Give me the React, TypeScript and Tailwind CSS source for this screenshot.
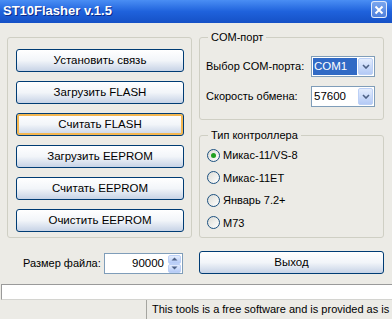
import clsx from 'clsx'

const ui = "font-['Liberation_Sans',Arial,sans-serif]"

function XpButton({ label, focused }: { label: string; focused?: boolean }) {
  return (
    <button
      className={clsx(
        'h-[23px] w-full rounded-[3px] border border-[#003c74] bg-linear-to-b from-white via-[#f2f5f9] to-[#c7d3e6] text-[11.5px] text-black',
        focused && 'shadow-[inset_0_0_0_2px_#f4b751]'
      )}
    >
      {label}
    </button>
  )
}

function GroupBox({ title, className, children }: { title: string; className?: string; children: React.ReactNode }) {
  return (
    <div className={clsx('relative rounded-[3px] border border-[#cfcfc4]', className)}>
      {title && (
        <span className="absolute -top-[8px] left-[8px] bg-[#ecebe6] px-[3px] text-[11px] leading-[15px] text-black">
          {title}
        </span>
      )}
      {children}
    </div>
  )
}

function ComboArrow() {
  return (
    <div className="flex h-full w-[15px] shrink-0 items-center justify-center rounded-[2px] border border-[#bcd0f6] bg-linear-to-b from-[#e4edfd] to-[#b4caf6]">
      <svg width="8" height="5" viewBox="0 0 8 5">
        <path d="M1 1 L4 4 L7 1" fill="none" stroke="#4d6185" strokeWidth="1.6" />
      </svg>
    </div>
  )
}

function Combo({ value, selected }: { value: string; selected?: boolean }) {
  return (
    <div className="flex h-[21px] w-[64px] shrink-0 border border-[#7f9db9] bg-white p-[1px]">
      <div className="flex-1 pr-[1px]">
        <div
          className={clsx(
            'flex h-full items-center px-[1px] text-[11.5px]',
            selected ? 'bg-[#316ac5] text-white' : 'text-black'
          )}
        >
          {value}
        </div>
      </div>
      <ComboArrow />
    </div>
  )
}

function Radio({ label, checked }: { label: string; checked?: boolean }) {
  return (
    <div className="flex h-[22.5px] items-center">
      <div className="flex h-[13px] w-[13px] items-center justify-center rounded-full border border-[#1c5180] bg-linear-to-br from-[#dcdcd6] to-white">
        {checked && <div className="h-[5px] w-[5px] rounded-full bg-[#21a121]" />}
      </div>
      <span className="ml-[3px] text-[11px] text-black">{label}</span>
    </div>
  )
}

function SpinArrow({ up }: { up?: boolean }) {
  return (
    <div className="flex h-[9px] w-[13px] items-center justify-center rounded-[2px] border border-[#bcd0f6] bg-linear-to-b from-[#e4edfd] to-[#b4caf6]">
      <svg width="7" height="4" viewBox="0 0 7 4">
        <path d={up ? 'M0.5 3.5 L3.5 0.5 L6.5 3.5 Z' : 'M0.5 0.5 L3.5 3.5 L6.5 0.5 Z'} fill="#4d6185" />
      </svg>
    </div>
  )
}

export default function App() {
  return (
    <div className={clsx('h-[319px] w-[392px] overflow-hidden bg-[#ecebe6]', ui)}>
      {/* title bar */}
      <div className="flex h-[23px] items-start justify-between bg-linear-to-b from-[#4a8ef4] via-[#1f62dc] to-[#1551c6] pl-[3px] pr-[5px]">
        <span className="mt-[3px] text-[13px] font-bold leading-[16px] text-white [text-shadow:1px_1px_0_#0a2a8a]">
          ST10Flasher v.1.5
        </span>
        <div className="mt-[1px] flex h-[17px] w-[16px] items-center justify-center rounded-[3px] border border-white/80 bg-linear-to-b from-[#7aa6ee] to-[#4f80dc]">
          <svg width="10" height="10" viewBox="0 0 10 10">
            <path d="M1.5 1.5 L8.5 8.5 M8.5 1.5 L1.5 8.5" stroke="white" strokeWidth="2" />
          </svg>
        </div>
      </div>

      {/* main */}
      <div className="flex h-[261px] gap-[7px] px-[7px] pt-[14px]">
        <div className="flex w-[185px] flex-col">
          <GroupBox title="" className="h-[201px]">
            <div className="flex flex-col gap-[9px] pl-[8px] pr-[7px] pt-[11px]">
              <XpButton label="Установить связь" />
              <XpButton label="Загрузить FLASH" />
              <XpButton label="Считать FLASH" focused />
              <XpButton label="Загрузить EEPROM" />
              <XpButton label="Считать EEPROM" />
              <XpButton label="Очистить EEPROM" />
            </div>
          </GroupBox>
          <div className="mt-[15px] flex items-center">
            <span className="ml-[16px] w-[81px] shrink-0 whitespace-nowrap text-[11px] text-black">Размер файла:</span>
            <div className="flex h-[21px] w-[79px] shrink-0 items-center border border-[#7f9db9] bg-white p-[1px]">
              <span className="flex-1 pr-[4px] text-right text-[11.5px] text-black">90000</span>
              <div className="flex flex-col">
                <SpinArrow up />
                <SpinArrow />
              </div>
            </div>
          </div>
        </div>

        <div className="flex w-[185px] flex-col">
          <GroupBox title="COM-порт" className="h-[83px]">
            <div className="flex flex-col gap-[9px] pl-[6px] pr-[8px] pt-[18px]">
              <div className="flex items-center justify-between">
                <span className="whitespace-nowrap text-[11px] text-black">Выбор COM-порта:</span>
                <Combo value="COM1" selected />
              </div>
              <div className="flex items-center justify-between">
                <span className="whitespace-nowrap text-[11px] text-black">Скорость обмена:</span>
                <Combo value="57600" />
              </div>
            </div>
          </GroupBox>
          <GroupBox title="Тип контроллера" className="mt-[15px] h-[103px]">
            <div className="flex flex-col pl-[7px] pt-[8px]">
              <Radio label="Микас-11/VS-8" checked />
              <Radio label="Микас-11ET" />
              <Radio label="Январь 7.2+" />
              <Radio label="M73" />
            </div>
          </GroupBox>
          <div className="mt-[11px]">
            <XpButton label="Выход" />
          </div>
        </div>
      </div>

      {/* progress bar */}
      <div className="ml-[1px] h-[16px] border-l border-t border-b border-[#9a9a9a] border-b-[#d4d4d0] bg-white" />

      {/* status bar */}
      <div className="flex h-[19px]">
        <div className="w-[146px] shrink-0" />
        <div className="flex shrink-0 items-center whitespace-nowrap border-l border-[#a5a5a0] pl-[5px] text-[11px] text-black">
          This tools is a free software and is provided as is
        </div>
      </div>
    </div>
  )
}
